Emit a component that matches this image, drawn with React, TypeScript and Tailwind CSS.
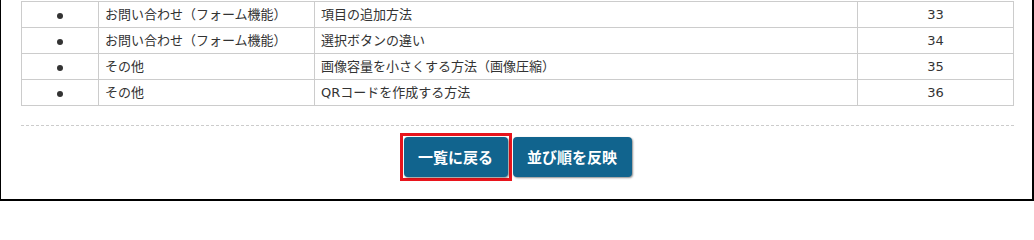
const rows = [
  { cat: 'お問い合わせ（フォーム機能）', title: '項目の追加方法', no: 33 },
  { cat: 'お問い合わせ（フォーム機能）', title: '選択ボタンの違い', no: 34 },
  { cat: 'その他', title: '画像容量を小さくする方法（画像圧縮）', no: 35 },
  { cat: 'その他', title: 'QRコードを作成する方法', no: 36 },
];

const App = () => {
  return (
    <div
      className="w-[1034px] h-[201px] bg-white border-l border-r-2 border-b-2 border-black pl-5 pr-[18px] pt-px text-[#333]"
      style={{ fontFamily: '"DejaVu Sans", "Noto Sans CJK JP", sans-serif' }}
    >
      <table className="w-full border-collapse text-[13px] leading-none">
        <colgroup>
          <col className="w-[77px]" />
          <col className="w-[216px]" />
          <col className="w-[543px]" />
          <col />
        </colgroup>
        <tbody>
          {rows.map((r) => (
            <tr key={r.no} className="h-[26px]">
              <td className="border border-[#ccc] text-center">
                <span className="inline-block w-[6px] h-[6px] rounded-full bg-[#333] align-middle" />
              </td>
              <td className="border border-[#ccc] pl-1.5">{r.cat}</td>
              <td className="border border-[#ccc] pl-1.5">{r.title}</td>
              <td className="border border-[#ccc] text-center">{r.no}</td>
            </tr>
          ))}
        </tbody>
      </table>

      <div className="mt-[19px] border-t border-dashed border-[#ccc]" />

      <div
        className="flex justify-center gap-[5px] mt-[11px]"
        style={{ fontFamily: '"Noto Sans CJK JP", sans-serif' }}
      >
        <div className="-m-1 border-[3px] border-[#e8141c] p-px">
          <button
            type="button"
            className="block w-[104px] h-[40px] rounded-[4px] bg-[#11648e] text-white font-bold text-[15px] shadow-[1px_1px_2px_rgba(0,0,0,0.45)]"
          >
            一覧に戻る
          </button>
        </div>
        <button
          type="button"
          className="w-[119px] h-[40px] rounded-[4px] bg-[#11648e] text-white font-bold text-[15px] shadow-[1px_1px_2px_rgba(0,0,0,0.45)]"
        >
          並び順を反映
        </button>
      </div>
    </div>
  );
};

export default App;
